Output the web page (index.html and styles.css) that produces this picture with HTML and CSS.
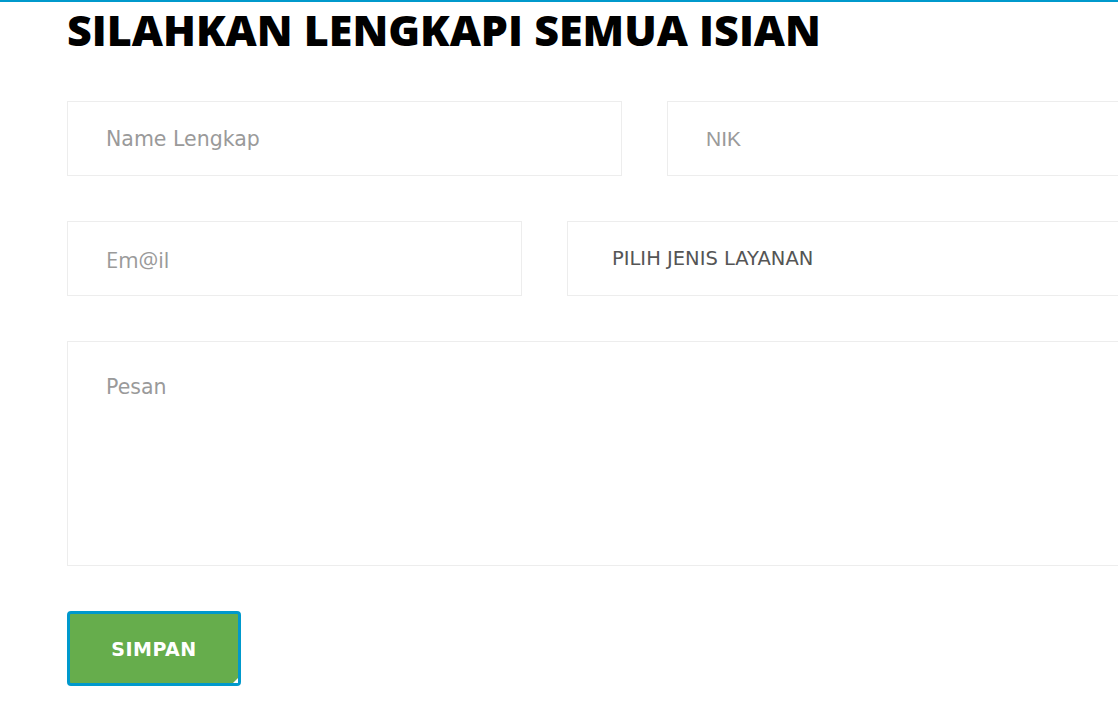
FILE: index.html
```html
<!DOCTYPE html>
<html lang="id">
<head>
  <meta charset="UTF-8">
  <title>Form Layanan</title>
  <link rel="stylesheet" href="styles.css">
</head>
<body>
  <div class="topbar"></div>
  <div class="wrap">
    <h1 class="judul">SILAHKAN LENGKAPI SEMUA ISIAN</h1>
    <form class="form-isian">
      <div class="baris baris-sama">
        <input type="text" class="isian" placeholder="Name Lengkap">
        <input type="text" class="isian isian-nik" placeholder="NIK">
      </div>
      <div class="baris baris-beda">
        <input type="email" class="isian isian-email" placeholder="Em@il">
        <select class="isian pilihan">
          <option>PILIH JENIS LAYANAN</option>
        </select>
      </div>
      <textarea class="isian pesan" placeholder="Pesan"></textarea>
      <div>
        <button type="submit" class="tombol">SIMPAN</button>
      </div>
    </form>
  </div>
</body>
</html>
```

FILE: styles.css
```css
html, body { margin: 0; overflow-x: hidden; background: #fff; }
body { font-family: "DejaVu Sans", sans-serif; }
.topbar { height: 2px; background: #0099cc; }
.wrap { padding-left: 67px; width: 1155px; }
.judul { margin: 0; padding-top: 2px; font-family: "Open Sans", sans-serif; font-weight: 800; font-size: 43px; line-height: 52px; color: #000; }
.form-isian { display: flex; flex-direction: column; gap: 45px; margin-top: 45px; }
.baris { display: grid; column-gap: 45px; }
.baris-sama { grid-template-columns: 555px 555px; }
.baris-beda { grid-template-columns: 455px 655px; }
.isian { box-sizing: border-box; height: 75px; border: 1px solid #ededed; border-radius: 0; background: #fff; padding: 0 38px; font-family: "DejaVu Sans", sans-serif; font-size: 20.5px; color: #555; outline: none; }
.isian::placeholder { color: #9a9a9a; }
.isian-nik { font-family: "Liberation Sans", Arial, sans-serif; font-size: 21px; }
.isian-email { font-family: "Open Sans", sans-serif; font-size: 22px; }
.pilihan { appearance: none; -webkit-appearance: none; padding-left: 44px; font-size: 19.5px; color: #555; }
.pesan { height: 225px; padding-top: 33px; resize: none; width: 100%; }
.tombol { position: relative; box-sizing: border-box; width: 174px; height: 75px; background: #66ad4c; border: 3px solid #0099cc; border-radius: 4px; color: #fff; font-family: "DejaVu Sans", sans-serif; font-weight: 700; font-size: 19px; letter-spacing: 0.5px; cursor: pointer; }
.tombol::after { content: ""; position: absolute; right: 0; bottom: 0; border-left: 5px solid transparent; border-bottom: 5px solid #fff; }
```
